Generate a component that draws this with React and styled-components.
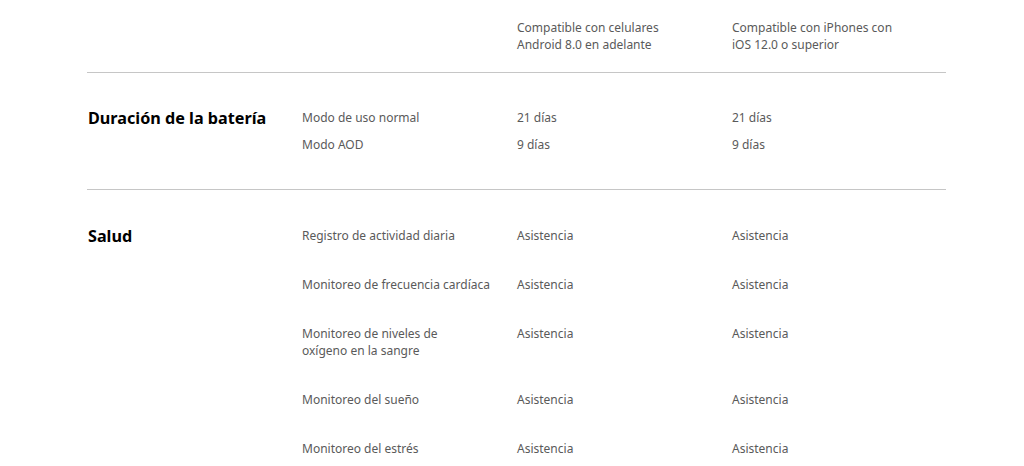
import React from "react";
import styled, { createGlobalStyle } from "styled-components";

const GlobalStyle = createGlobalStyle`
  body {
    margin: 0;
    background: #ffffff;
    font-family: "Noto Sans", "Open Sans", sans-serif;
  }
`;

const sections = [
  {
    title: "Duración de la batería",
    compact: true,
    rows: [
      ["Modo de uso normal", "21 días", "21 días"],
      ["Modo AOD", "9 días", "9 días"],
    ],
  },
  {
    title: "Salud",
    rows: [
      ["Registro de actividad diaria", "Asistencia", "Asistencia"],
      ["Monitoreo de frecuencia cardíaca", "Asistencia", "Asistencia"],
      ["Monitoreo de niveles de\noxígeno en la sangre", "Asistencia", "Asistencia"],
      ["Monitoreo del sueño", "Asistencia", "Asistencia"],
      ["Monitoreo del estrés", "Asistencia", "Asistencia"],
    ],
  },
];

const SpecTable = () => {
  return (
    <Wrapper>
      <Header>
        <span />
        <span />
        <Cell>Compatible con celulares<br />Android 8.0 en adelante</Cell>
        <Cell>Compatible con iPhones con<br />iOS 12.0 o superior</Cell>
      </Header>
      {sections.map((s) => (
        <Section key={s.title} $compact={s.compact}>
          <Title>{s.title}</Title>
          <Rows $compact={s.compact}>
            {s.rows.map((r) => (
              <Row key={r[0]}>
                {r.map((c, i) => (
                  <Cell key={i}>{c}</Cell>
                ))}
              </Row>
            ))}
          </Rows>
        </Section>
      ))}
    </Wrapper>
  );
};

const Wrapper = styled.div`
  width: 859px;
  margin: 0 0 0 87px;
`;

const Header = styled.div`
  display: grid;
  grid-template-columns: 215px 215px 215px 214px;
  padding: 19px 0 19px;
  border-bottom: 1px solid #c6c6c6;
`;

const Cell = styled.div`
  font-size: 12px;
  line-height: 17px;
  color: #5a5a5a;
  white-space: pre-line;
`;

const Section = styled.div`
  display: grid;
  grid-template-columns: 215px 1fr;
  align-items: start;
  padding: ${({ $compact }) => ($compact ? "36px 0 36px" : "37px 0 36px")};
  border-bottom: 1px solid #c6c6c6;
  &:last-child {
    border-bottom: none;
  }
`;

const Title = styled.h3`
  margin: 0;
  font-size: 16.2px;
  line-height: 19px;
  font-weight: 700;
  color: #000;
  padding-left: 1px;
`;

const Rows = styled.div`
  display: flex;
  flex-direction: column;
  gap: ${({ $compact }) => ($compact ? "10px" : "32px")};
`;

const Row = styled.div`
  display: grid;
  grid-template-columns: 215px 215px 214px;
`;

const App = () => (
  <>
    <GlobalStyle />
    <SpecTable />
  </>
);

export default App;
